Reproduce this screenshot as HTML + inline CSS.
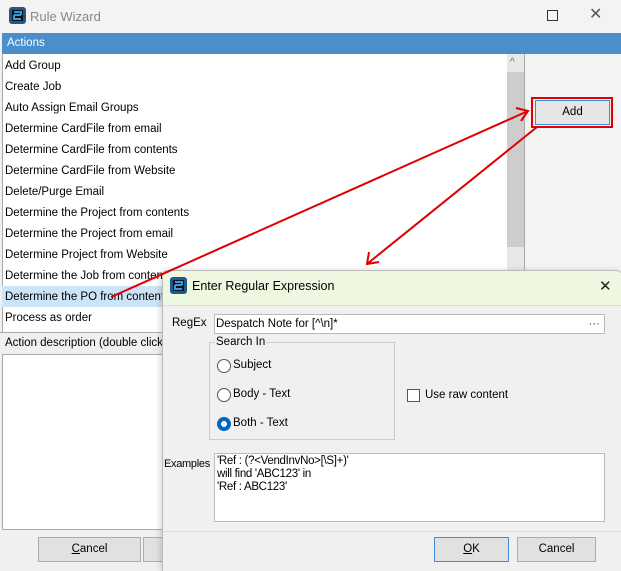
<html><head><style>
body{margin:0;width:621px;height:570px;overflow:hidden;font-family:"Liberation Sans",sans-serif;font-size:11.5px;color:#000;background:#f0f0f0;position:relative}
.a{position:absolute}
.it{position:absolute;left:5px;height:21px;line-height:21px}
.btn{position:absolute;background:#e1e1e1;border:1px solid #adadad;text-align:center;box-sizing:border-box;line-height:23px}
.rad{position:absolute;width:12px;height:12px;border:1px solid #555;border-radius:50%;background:#fff}
</style></head><body>
<div class="a" style="left:0;top:0;width:621px;height:33px;background:#f3f3f3"></div>
<svg class="a" style="left:9px;top:7px" width="17" height="17"><rect width="17" height="17" rx="3" fill="#1a5a8c"/><rect x="3" y="3" width="11" height="11" fill="#111"/><path d="M5 8h7M5 8v4h7M5 5h7v3" stroke="#3a9ad8" stroke-width="2" fill="none"/></svg>
<div class="a" style="left:30px;top:9px;font-size:13px;color:#888">Rule Wizard</div>
<div class="a" style="left:547px;top:10px;width:9px;height:9px;border:1px solid #333"></div>
<div class="a" style="left:589px;top:4px;font-size:16px;color:#555">✕</div>
<div class="a" style="left:2px;top:33px;width:617px;height:21px;background:#4a8fcb;color:#fff;line-height:21px;padding-left:5px">Actions</div>
<div class="a" style="left:2px;top:54px;width:505px;height:278px;background:#fff;border-left:1px solid #aaa"></div>
<div class="a" style="left:507px;top:54px;width:17px;height:278px;background:#e8e8e8"></div>
<div class="a" style="left:507px;top:72px;width:17px;height:175px;background:#cdcdcd"></div>
<div class="a" style="left:510px;top:57px;color:#666;font-size:10px">^</div>
<div class="a" style="left:524px;top:54px;width:1px;height:216px;background:#aaa"></div>
<div class="a" style="left:525px;top:54px;width:96px;height:216px;background:#f3f3f3"></div>
<div class="a" style="left:2px;top:286px;width:160px;height:21px;background:#cce4f7"></div>
<div class="it" style="top:56px">Add Group</div>
<div class="it" style="top:77px">Create Job</div>
<div class="it" style="top:98px">Auto Assign Email Groups</div>
<div class="it" style="top:119px">Determine CardFile from email</div>
<div class="it" style="top:140px">Determine CardFile from contents</div>
<div class="it" style="top:161px">Determine CardFile from Website</div>
<div class="it" style="top:182px">Delete/Purge Email</div>
<div class="it" style="top:203px">Determine the Project from contents</div>
<div class="it" style="top:224px">Determine the Project from email</div>
<div class="it" style="top:245px">Determine Project from Website</div>
<div class="it" style="top:266px">Determine the Job from contents</div>
<div class="it" style="top:287px">Determine the PO from contents</div>
<div class="it" style="top:308px">Process as order</div>
<div class="a" style="left:0;top:332px;width:162px;height:1px;background:#aaa"></div>
<div class="a" style="left:5px;top:337px">Action description (double click to</div>
<div class="a" style="left:2px;top:354px;width:160px;height:174px;background:#fff;border:1px solid #aaa"></div>
<div class="btn" style="left:38px;top:537px;width:103px;height:25px"><u>C</u>ancel</div>
<div class="btn" style="left:143px;top:537px;width:25px;height:25px"></div>
<div class="a" style="left:531px;top:97px;width:78px;height:27px;border:2px solid #e00000"></div>
<div class="btn" style="left:535px;top:100px;width:75px;height:25px;border-color:#3c8fe0;background:#e5e5e5">Add</div>
<!-- dialog -->
<div class="a" style="left:162px;top:270px;width:459px;height:300px;background:#f0f0f0;border-left:1px solid #bbb;border-top:1px solid #bbb;border-radius:6px 6px 0 0;box-shadow:-2px 0 6px rgba(0,0,0,.15)"></div>
<div class="a" style="left:163px;top:271px;width:458px;height:34px;background:#eef7e0;border-radius:6px 6px 0 0;border-bottom:1px solid #ddd"></div>
<svg class="a" style="left:170px;top:277px" width="17" height="17"><rect width="17" height="17" rx="3" fill="#1a5a8c"/><rect x="3" y="3" width="11" height="11" fill="#111"/><path d="M5 8h7M5 8v4h7M5 5h7v3" stroke="#3a9ad8" stroke-width="2" fill="none"/></svg>
<div class="a" style="left:192px;top:279px;font-size:12.5px">Enter Regular Expression</div>
<div class="a" style="left:599px;top:277px;font-size:15px;color:#222">✕</div>
<div class="a" style="left:172px;top:317px">RegEx</div>
<div class="a" style="left:214px;top:314px;width:391px;background:#fff;border:1px solid #bbb;line-height:18px;padding-left:1px;box-sizing:border-box;height:20px">Despatch Note for [^\n]*<span style="position:absolute;right:4px;color:#444">···</span></div>
<div class="a" style="left:209px;top:342px;width:184px;height:96px;border:1px solid #ccc"></div>
<div class="a" style="left:215px;top:336px;background:#f0f0f0;padding:0 1px">Search In</div>
<div class="rad" style="left:217px;top:359px"></div><div class="a" style="left:233px;top:359px">Subject</div>
<div class="rad" style="left:217px;top:388px"></div><div class="a" style="left:233px;top:388px">Body - Text</div>
<div class="rad" style="left:217px;top:417px;border-color:#0067c0;background:#0067c0"></div><div class="a" style="left:221px;top:421px;width:6px;height:6px;border-radius:50%;background:#fff"></div><div class="a" style="left:233px;top:417px">Both - Text</div>
<div class="a" style="left:407px;top:389px;width:11px;height:11px;border:1px solid #555;background:#fff"></div>
<div class="a" style="left:425px;top:389px">Use raw content</div>
<div class="a" style="left:164px;top:458px;font-size:11px;letter-spacing:-0.3px">Examples</div>
<div class="a" style="left:214px;top:453px;width:391px;height:69px;background:#fff;border:1px solid #bbb;box-sizing:border-box;padding:1px 2px;font-size:11.5px;line-height:13px;letter-spacing:-0.3px">'Ref : (?&lt;VendInvNo&gt;[\S]+)'<br>will find 'ABC123' in<br>'Ref : ABC123'</div>
<div class="a" style="left:163px;top:531px;width:458px;height:39px;background:#f0f0f0;border-top:1px solid #ddd"></div>
<div class="btn" style="left:434px;top:537px;width:75px;height:25px;border-color:#3c8fe0"><u>O</u>K</div>
<div class="btn" style="left:517px;top:537px;width:79px;height:25px">Cancel</div>
<svg class="a" style="left:0;top:0" width="621" height="570">
<g stroke="#e00000" stroke-width="2" fill="none">
<line x1="111" y1="297" x2="528" y2="111"/><polyline points="516,108 528,111 521,121"/>
<line x1="537" y1="127" x2="367" y2="264"/><polyline points="369,252 367,264 379,262"/>
</g></svg>
</body></html>
